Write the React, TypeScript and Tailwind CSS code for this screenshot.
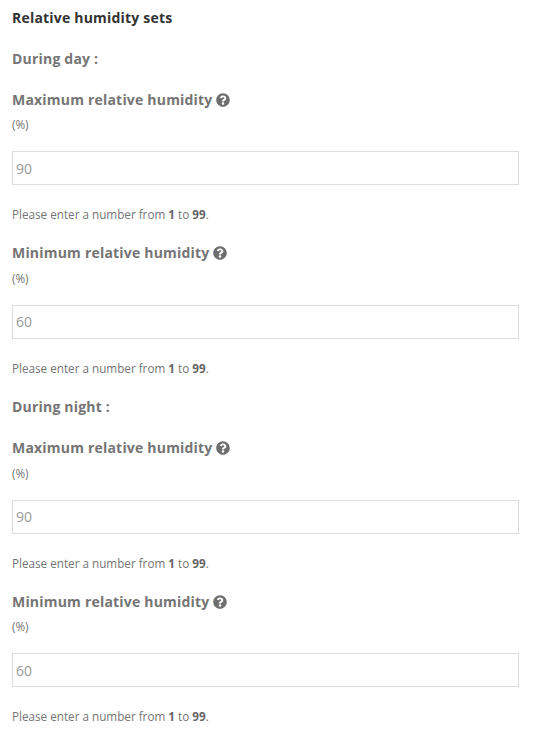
import { FaQuestionCircle } from 'react-icons/fa';

interface HumidityFieldProps {
  label: string;
  value: string;
}

const HumidityField = ({ label, value }: HumidityFieldProps) => {
  return (
    <div className="h-[153.6px]">
      <div className="flex h-[20px] items-center gap-[3.5px] text-[14px] font-bold tracking-[0.2px] text-[#757575]">
        {label}
        <FaQuestionCircle className="mt-[1.4px] h-[14px] w-[14px] text-[#6e6e6e]" />
      </div>
      <div className="mt-[7px] h-[16px] text-[11.7px] leading-[16px] text-[#757575]">(%)</div>
      <input
        readOnly
        value={value}
        className="mt-[19px] block h-[34px] w-[507px] border border-[#dddddd] bg-white px-[3px] text-[14px] text-[#999999] outline-none"
      />
      <p className="mt-[21px] h-[16px] text-[11.7px] leading-[16px] text-[#757575]">
        Please enter a number from <b className="text-[#666666]">1</b> to <b className="text-[#666666]">99</b>.
      </p>
    </div>
  );
};

const App = () => {
  return (
    <div className="h-[733px] w-[536px] overflow-hidden bg-white pl-[12px] pt-[8px] font-['Open_Sans',sans-serif]">
      <h2 className="h-[20px] text-[14px] font-bold leading-[20px] tracking-[0.2px] text-[#333333]">Relative humidity sets</h2>
      <div className="mt-[20px] h-[21px] text-[14px] font-bold leading-[21px] tracking-[0.2px] text-[#757575]">During day :</div>
      <div className="mt-[20px]">
        <HumidityField label="Maximum relative humidity" value="90" />
        <HumidityField label="Minimum relative humidity" value="60" />
      </div>
      <div className="h-[21px] text-[14px] font-bold leading-[21px] tracking-[0.2px] text-[#757575]">During night :</div>
      <div className="mt-[20.4px]">
        <HumidityField label="Maximum relative humidity" value="90" />
        <HumidityField label="Minimum relative humidity" value="60" />
      </div>
    </div>
  );
};

export default App;
